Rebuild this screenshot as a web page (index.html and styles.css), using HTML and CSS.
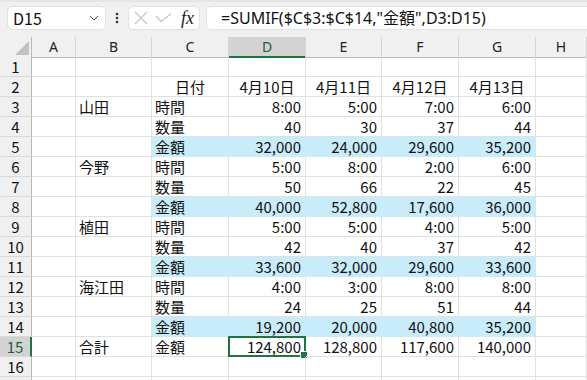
FILE: index.html
```html
<!DOCTYPE html>
<html>
	<head>
		<meta charset="utf-8">
		<link rel="stylesheet" href="styles.css">
	</head>
	<body>
		<div class="toolbar">
			<div class="namebox">
				<span>D15</span>
				<svg class="chevron" width="10" height="6" viewBox="0 0 10 6"><path d="M1 1 L5 5 L9 1" fill="none" stroke="#444" stroke-width="1"/></svg>
			</div>
			<div class="dots">
				<svg width="4" height="12" viewBox="0 0 4 12"><circle cx="2" cy="2" r="1.3" fill="#333"/><circle cx="2" cy="6" r="1.3" fill="#333"/><circle cx="2" cy="10" r="1.3" fill="#333"/></svg>
			</div>
			<div class="fxbox">
				<svg width="14" height="14" viewBox="0 0 14 14"><path d="M1 1 L13 13 M13 1 L1 13" stroke="#c4c4c4" stroke-width="1.2"/></svg>
				<svg width="17" height="10" viewBox="0 0 17 10"><path d="M1 3 L6 8.5 L16 0.8" fill="none" stroke="#c4c4c4" stroke-width="1.2"/></svg>
				<span class="fx">fx</span>
			</div>
			<div class="formula">=SUMIF($C$3:$C$14,"金額",D3:D15)</div>
		</div>

		<div class="sheet">
			<div class="row head">
				<span class="corner"><i class="tri"></i></span><span>A</span><span>B</span><span>C</span><span class="sel">D</span><span>E</span><span>F</span><span>G</span><span>H</span>
			</div>
			<div class="row">
				<span class="rh">1</span><span></span><span></span><span></span><span></span><span></span><span></span><span></span><span></span>
			</div>
			<div class="row">
				<span class="rh">2</span><span></span><span></span><span class="c">日付</span><span class="c">4月10日</span><span class="c">4月11日</span><span class="c">4月12日</span><span class="c">4月13日</span><span></span>
			</div>
			<div class="row">
				<span class="rh">3</span><span></span><span>山田</span><span>時間</span><span class="n">8:00</span><span class="n">5:00</span><span class="n">7:00</span><span class="n">6:00</span><span></span>
			</div>
			<div class="row">
				<span class="rh">4</span><span></span><span></span><span>数量</span><span class="n">40</span><span class="n">30</span><span class="n">37</span><span class="n">44</span><span></span>
			</div>
			<div class="row">
				<span class="rh">5</span><span></span><span></span><span class="fill">金額</span><span class="n fill">32,000</span><span class="n fill">24,000</span><span class="n fill">29,600</span><span class="n fill">35,200</span><span></span>
			</div>
			<div class="row">
				<span class="rh">6</span><span></span><span>今野</span><span>時間</span><span class="n">5:00</span><span class="n">8:00</span><span class="n">2:00</span><span class="n">6:00</span><span></span>
			</div>
			<div class="row">
				<span class="rh">7</span><span></span><span></span><span>数量</span><span class="n">50</span><span class="n">66</span><span class="n">22</span><span class="n">45</span><span></span>
			</div>
			<div class="row">
				<span class="rh">8</span><span></span><span></span><span class="fill">金額</span><span class="n fill">40,000</span><span class="n fill">52,800</span><span class="n fill">17,600</span><span class="n fill">36,000</span><span></span>
			</div>
			<div class="row">
				<span class="rh">9</span><span></span><span>植田</span><span>時間</span><span class="n">5:00</span><span class="n">5:00</span><span class="n">4:00</span><span class="n">5:00</span><span></span>
			</div>
			<div class="row">
				<span class="rh">10</span><span></span><span></span><span>数量</span><span class="n">42</span><span class="n">40</span><span class="n">37</span><span class="n">42</span><span></span>
			</div>
			<div class="row">
				<span class="rh">11</span><span></span><span></span><span class="fill">金額</span><span class="n fill">33,600</span><span class="n fill">32,000</span><span class="n fill">29,600</span><span class="n fill">33,600</span><span></span>
			</div>
			<div class="row">
				<span class="rh">12</span><span></span><span>海江田</span><span>時間</span><span class="n">4:00</span><span class="n">3:00</span><span class="n">8:00</span><span class="n">8:00</span><span></span>
			</div>
			<div class="row">
				<span class="rh">13</span><span></span><span></span><span>数量</span><span class="n">24</span><span class="n">25</span><span class="n">51</span><span class="n">44</span><span></span>
			</div>
			<div class="row">
				<span class="rh">14</span><span></span><span></span><span class="fill">金額</span><span class="n fill">19,200</span><span class="n fill">20,000</span><span class="n fill">40,800</span><span class="n fill">35,200</span><span></span>
			</div>
			<div class="row">
				<span class="rh sel">15</span><span></span><span>合計</span><span>金額</span><span class="n active">124,800</span><span class="n">128,800</span><span class="n">117,600</span><span class="n">140,000</span><span></span>
			</div>
			<div class="row">
				<span class="rh">16</span><span></span><span></span><span></span><span></span><span></span><span></span><span></span><span></span>
			</div>
			<div class="row">
				<span class="rh"></span><span></span><span></span><span></span><span></span><span></span><span></span><span></span><span></span>
			</div>
		</div>
	</body>
</html>
```

FILE: styles.css
```css
* {
	margin: 0;
	padding: 0;
	box-sizing: border-box;
}
body {
	width: 587px;
	height: 380px;
	overflow: hidden;
	background: #fff;
	color: #111;
	font-family: "Noto Sans CJK JP", "Noto Sans", sans-serif;
}

/* formula bar */
.toolbar {
	display: flex;
	align-items: flex-start;
	height: 37px;
	padding: 4px 0 0 7px;
	background: #f0f0f0;
	border-top: 2px solid #e6e6e6;
}
.namebox {
	display: flex;
	align-items: center;
	flex: none;
	width: 99px;
	height: 24px;
	padding: 0 6px 0 5px;
	background: #fff;
	border: 1px solid #e2e2e2;
	border-radius: 5px;
	font-size: 16px;
	line-height: 22px;
}
.namebox .chevron {
	margin-left: auto;
}
.dots {
	display: flex;
	align-items: center;
	justify-content: center;
	flex: none;
	width: 22px;
	height: 24px;
}
.fxbox {
	display: flex;
	align-items: center;
	flex: none;
	width: 72px;
	height: 24px;
	padding-left: 5px;
	gap: 7px;
	background: #fff;
	border: 1px solid #e2e2e2;
	border-radius: 5px;
}
.fxbox .fx {
	margin-left: 2px;
	font-family: "Liberation Serif", serif;
	font-style: italic;
	font-size: 18px;
	line-height: 22px;
	color: #222;
}
.formula {
	flex: none;
	width: 400px;
	height: 24px;
	margin-left: 6px;
	padding-left: 14px;
	background: #fff;
	border: 1px solid #e2e2e2;
	border-radius: 5px;
	font-family: "Noto Sans", "Noto Sans CJK JP", sans-serif;
	font-size: 16px;
	line-height: 22px;
	white-space: nowrap;
}

/* grid */
.row {
	display: grid;
	grid-template-columns: 32px 44px 76px 77px 77px 76px 77px 77px 1fr;
	height: 20px;
}
.row > span {
	position: relative;
	padding: 0 4px 0 3px;
	border-right: 1px solid #e1e1e1;
	border-bottom: 1px solid #e1e1e1;
	font-size: 15px;
	line-height: 19px;
	white-space: nowrap;
}
.row > .n {
	text-align: right;
}
.row > .c {
	text-align: center;
	padding: 0;
}
.row > .fill {
	background: #c9ecfa;
	border-right-color: #c9ecfa;
	border-bottom-color: #c9ecfa;
}
.row > .rh {
	padding: 0;
	text-align: center;
	background: #f0f0f0;
	border-right-color: #b9b9b9;
	border-bottom-color: #d9d9d9;
}
.head > span {
	padding: 0;
	text-align: center;
	background: #f0f0f0;
	border-right-color: #d4d4d4;
	border-bottom-color: #b9b9b9;
	font-family: "Noto Sans", sans-serif;
	font-size: 14px;
	color: #222;
}
.head > .corner {
	border-right-color: #b9b9b9;
}
.corner .tri {
	position: absolute;
	right: 2px;
	bottom: 2px;
	width: 0;
	height: 0;
	border-left: 14px solid transparent;
	border-bottom: 14px solid #c2c2c2;
}
.head > .sel {
	background: #d3d3d3;
	border-bottom: 2px solid #217346;
	color: #1d5e3a;
}
.row > .rh.sel {
	background: #d3d3d3;
	border-right: 2px solid #217346;
	color: #1d5e3a;
}

/* active cell */
.active::before {
	content: "";
	position: absolute;
	top: -1px;
	left: -1px;
	right: -1px;
	bottom: -1px;
	border: 2px solid #217346;
}
.active::after {
	content: "";
	position: absolute;
	right: -3px;
	bottom: -3px;
	width: 6px;
	height: 6px;
	background: #217346;
	border: 1px solid #fff;
}
```
